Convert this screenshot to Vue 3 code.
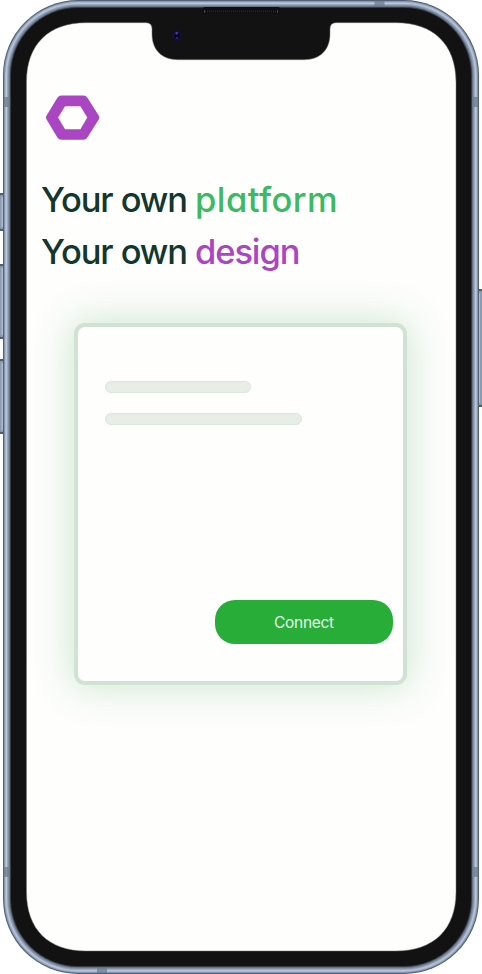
<script setup>
const rims = [
  { inset: 0, color: '#526175' },
  { inset: 1, color: '#8796aa' },
  { inset: 2, color: '#aab8ce' },
  { inset: 3, color: '#b9c6dc' },
  { inset: 4, color: '#9aa8be' },
  { inset: 5, color: '#8391a7' },
  { inset: 6, color: '#667386' },
  { inset: 7, color: '#353c46' },
  { inset: 8, color: '#121212' },
]
const buttons = [
  { x: 0, y: 193, h: 38 },
  { x: 0, y: 264, h: 75 },
  { x: 0, y: 359, h: 75 },
  { x: 477, y: 289, h: 118 },
]
</script>

<template>
  <main class="phone">
    <svg class="device" width="482" height="974" viewBox="0 0 482 974" aria-hidden="true">
      <g v-for="b in buttons" :key="b.y">
        <rect :x="b.x - 1" :y="b.y" width="7" :height="b.h" rx="1.5" fill="#4f5d70" />
        <rect :x="b.x" :y="b.y + 2" width="5" :height="b.h - 4" rx="1" fill="#8d9bb0" />
        <rect :x="b.x + 1.5" :y="b.y + 4" width="1.5" :height="b.h - 8" fill="#adbbd0" />
      </g>
      <rect
        v-for="r in rims" :key="r.inset"
        :x="3 + r.inset" :y="r.inset" :width="476 - 2 * r.inset" :height="974 - 2 * r.inset"
        :rx="75 - r.inset" :fill="r.color"
      />
      <g fill="#6c7d92" opacity=".75">
        <rect x="4" y="97" width="6" height="10" />
        <rect x="472" y="97" width="6" height="10" />
        <rect x="4" y="867" width="6" height="10" />
        <rect x="472" y="867" width="6" height="10" />
        <rect x="374.500" y="1" width="10" height="5" />
        <rect x="97" y="968" width="10" height="5" />
      </g>
      <path
        d="M86 22.700H146Q152 22.700 152 29V34C152 50 162 59.700 178 59.700H304C320 59.700 330 50 330 34V29Q330 22.700 336 22.700H396C433 22.700 456 44 456 82V892C456 929 434 951 396 951H86C48 951 26.500 929 26.500 892V82C26.500 44 49 22.700 86 22.700Z"
        fill="#fefefd" stroke="#777" stroke-width=".5"
      />
      <rect x="203" y="7" width="77" height="7" rx="2" fill="#0e0e0e" />
      <path d="M205 11.500H277" stroke="#262626" stroke-width="2" stroke-dasharray="1 1" />
      <path d="M204.500 10V13M277.500 10V13" stroke="#444" />
      <circle cx="177" cy="35.500" r="5" fill="#10103a" />
      <circle cx="177" cy="35.500" r="2.800" fill="#080820" />
      <circle cx="176.700" cy="33.300" r="1.200" fill="#4646a0" />
      <circle cx="177" cy="38" r="1.100" fill="#2525a0" />
    </svg>

    <div class="content">
      <svg class="logo" width="54" height="46" viewBox="0.600 0.400 54 46" role="img" aria-label="Logo">
        <path
          fill-rule="evenodd" fill="#aa46c1"
          d="M16 1H38Q40.500 1 42 3.200L53.300 21Q54.500 23 53.300 25L42 43Q40.500 45.200 38 45.200H16Q13.500 45.200 12 43L1.200 25Q0 23 1.200 21L12 3.200Q13.500 1 16 1ZM19.600 11.600L12.700 23L19.600 34.600H35L41.900 23L35 11.600Z"
        />
      </svg>
      <h1 class="headline">
        <span class="line"><span class="own">Your own</span><span class="platform">platform</span></span>
        <span class="line"><span class="own">Your own</span><span class="design">design</span></span>
      </h1>
      <section class="card">
        <div class="bar short"></div>
        <div class="bar long"></div>
        <button class="connect">Connect</button>
      </section>
    </div>
  </main>
</template>

<style>
body {
  background: #fff;
}
</style>

<style scoped>
.phone {
  position: relative;
  width: 482px;
  height: 974px;
  overflow: hidden;
  font-family: Inter, sans-serif;
  font-feature-settings: "cv11" 1;
}
.device {
  position: absolute;
  inset: 0;
}
.content {
  position: relative;
  display: flex;
  flex-direction: column;
  padding: 95px 41px 0;
}
.logo {
  display: block;
  margin-left: 5px;
}
.headline {
  display: flex;
  flex-direction: column;
  margin: 33px 0 0;
  color: #12372d;
  font-size: 34.500px;
  font-weight: 500;
  line-height: 52px;
}
.line {
  display: flex;
  height: 52px;
  white-space: nowrap;
}
.own {
  width: 154px;
  letter-spacing: -1.100px;
}
.platform {
  color: #3bb963;
  letter-spacing: .450px;
}
.design {
  color: #aa46c1;
  letter-spacing: -1.100px;
}
.card {
  box-sizing: border-box;
  display: flex;
  flex-direction: column;
  width: 333px;
  height: 362px;
  margin: 45px 0 0 33px;
  padding: 54px 10px 37px 27px;
  border: 4px solid #cfe2d3;
  border-radius: 11px;
  background: #fefefd;
  box-shadow: 0 0 38px 4px rgba(60, 160, 70, .23);
}
.bar {
  box-sizing: border-box;
  height: 12px;
  border: 1px solid #dae7dc;
  border-radius: 6px;
  background: #e7eee6;
}
.short {
  width: 146px;
}
.long {
  width: 197px;
  margin-top: 20px;
}
.connect {
  width: 178px;
  height: 44px;
  margin: auto 0 0 auto;
  padding: 2px 0 0;
  border: 0;
  border-radius: 20px;
  background: #27ad38;
  color: #e8f6e8;
  font: 400 15.500px/42px Inter, sans-serif;
  letter-spacing: -.300px;
}
</style>
